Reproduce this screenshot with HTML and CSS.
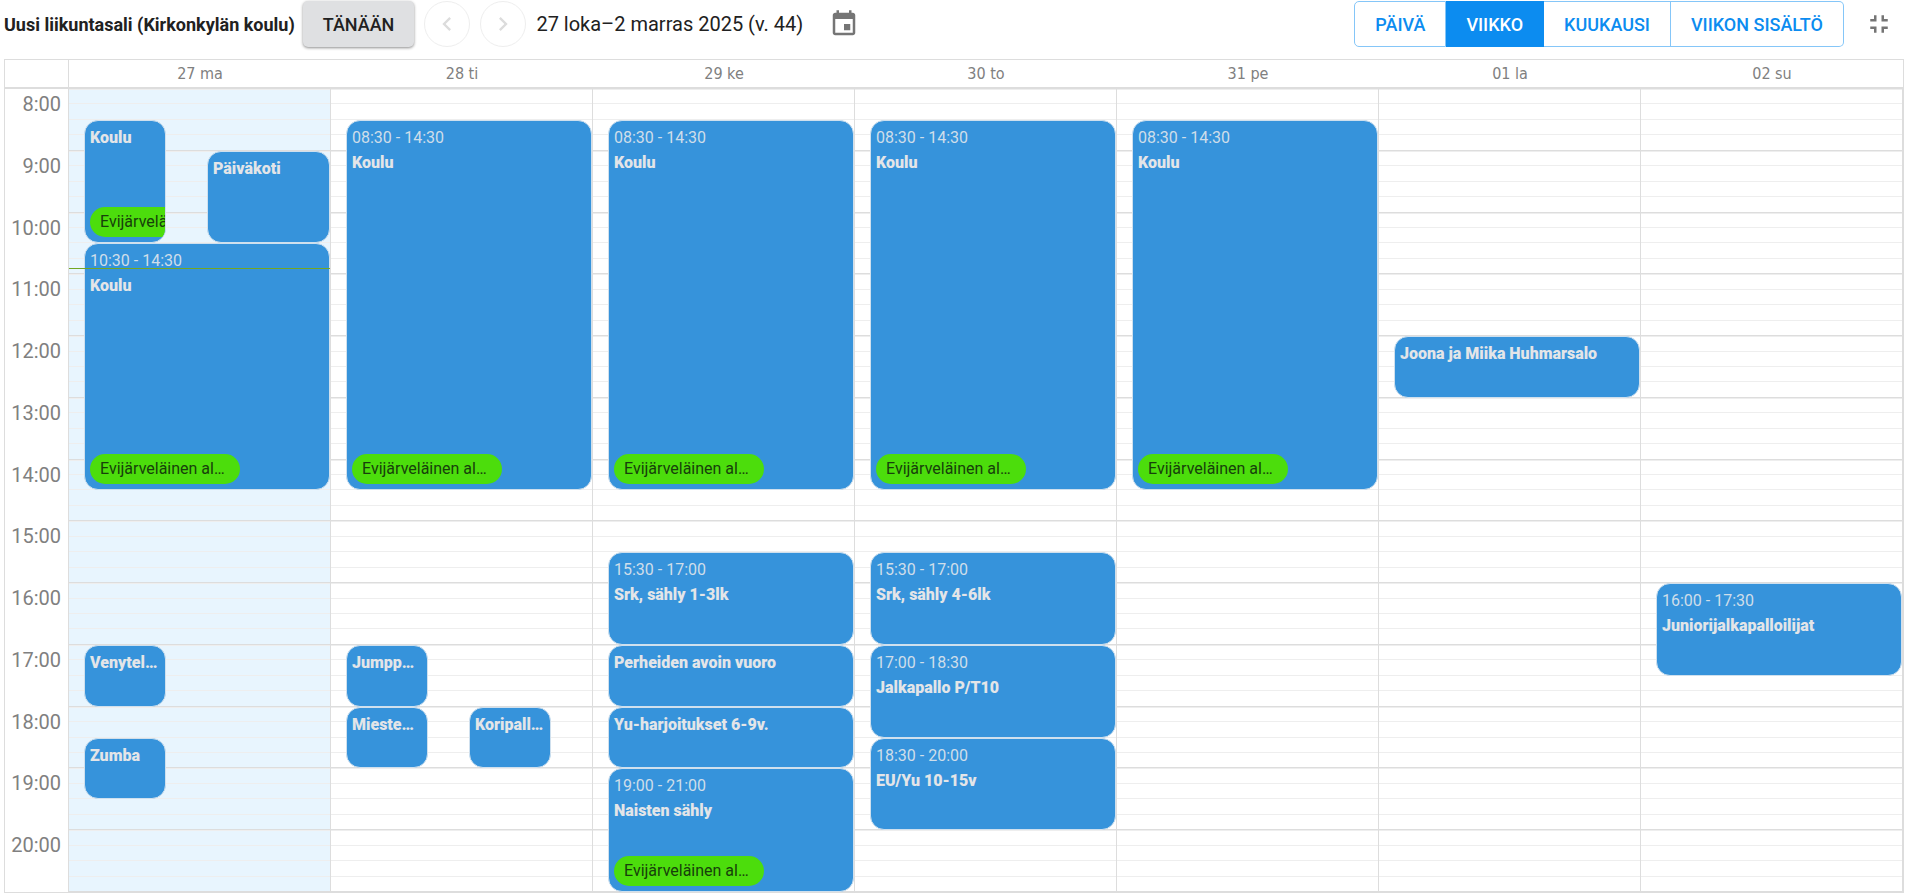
FILE: index.html
```html
<!DOCTYPE html>
<html lang="fi">
<head>
	<meta charset="UTF-8">
	<meta name="viewport" content="width=device-width, initial-scale=1.0">
	<title>Uusi liikuntasali (Kirkonkylän koulu)</title>
	<link rel="stylesheet" href="styles.css">
</head>
<body>

<!-- Toolbar -->
<header class="toolbar">
	<h1 class="room-title">Uusi liikuntasali (Kirkonkylän koulu)</h1>
	<button class="today-btn" type="button">TÄNÄÄN</button>
	<div class="nav-buttons">
		<button class="round-btn" type="button" aria-label="Edellinen" disabled>
			<svg viewBox="0 0 24 24" width="28" height="28"><path d="M15.41 7.41L14 6l-6 6 6 6 1.41-1.41L10.83 12z"/></svg>
		</button>
		<button class="round-btn" type="button" aria-label="Seuraava" disabled>
			<svg viewBox="0 0 24 24" width="28" height="28"><path d="M10 6L8.59 7.41 13.17 12l-4.58 4.59L10 18l6-6z"/></svg>
		</button>
	</div>
	<span class="date-range">27 loka–2 marras 2025 (v. 44)</span>
	<button class="icon-btn" type="button" aria-label="Valitse päivä">
		<svg viewBox="0 0 24 24" width="30" height="30"><path d="M17 12h-5v5h5v-5zM16 1v2H8V1H6v2H5c-1.11 0-1.99.9-1.99 2L3 19c0 1.1.89 2 2 2h14c1.1 0 2-.9 2-2V5c0-1.1-.9-2-2-2h-1V1h-2zm3 18H5V8h14v11z"/></svg>
	</button>

	<div class="view-switch">
		<button class="view-btn" type="button">PÄIVÄ</button>
		<button class="view-btn active" type="button">VIIKKO</button>
		<button class="view-btn" type="button">KUUKAUSI</button>
		<button class="view-btn" type="button">VIIKON SISÄLTÖ</button>
	</div>
	<button class="icon-btn" type="button" aria-label="Poistu koko näytöstä">
		<svg viewBox="0 0 24 24" width="30" height="30"><path d="M5 16h3v3h2v-5H5v2zm3-8H5v2h5V5H8v3zm6 11h2v-3h3v-2h-5v5zm2-11V5h-2v5h5V8h-3z"/></svg>
	</button>
</header>

<!-- Week calendar -->
<main class="calendar">
	<div class="day-names">
		<div class="corner"></div>
		<div class="day-name">27 ma</div>
		<div class="day-name">28 ti</div>
		<div class="day-name">29 ke</div>
		<div class="day-name">30 to</div>
		<div class="day-name">31 pe</div>
		<div class="day-name">01 la</div>
		<div class="day-name">02 su</div>
	</div>
	<div class="week" id="week">
		<div class="hours" id="hours"></div>
		<!-- Day columns are added here by JavaScript -->
	</div>
</main>

<script src="script.js"></script>

</body>
</html>
```
FILE: styles.css
```css
* {
	box-sizing: border-box;
}

body {
	display: flex;
	flex-direction: column;
	min-height: 100vh;
	margin: 0;
	padding: 0 8px 0 4px;
	background-color: white;
	color: #212121;
	font-family: Roboto, sans-serif;
	font-size: 16px;
}

button {
	font-family: inherit;
	cursor: pointer;
}

svg {
	display: block;
	fill: currentColor;
}

/* Toolbar */
.toolbar {
	display: flex;
	align-items: center;
	padding: 1px 0 12px;
}

.room-title {
	margin: 0 8px 0 0;
	font-size: 18px;
	font-weight: bold;
	white-space: nowrap;
}

.today-btn {
	height: 46px;
	padding: 0 20px;
	border: none;
	border-radius: 5px;
	background-color: #dfe0e2;
	box-shadow: 0 1px 3px rgba(0, 0, 0, 0.45);
	color: #212121;
	font-size: 18px;
	font-weight: 500;
}

.nav-buttons {
	display: flex;
	gap: 10px;
	margin: 0 10px;
}

.round-btn {
	display: flex;
	align-items: center;
	justify-content: center;
	width: 46px;
	height: 46px;
	padding: 0;
	border: 1px solid #eeeeee;
	border-radius: 50%;
	background: white;
	color: #dcdcdc;
}

.date-range {
	margin-right: 6px;
	font-size: 20px;
	white-space: nowrap;
}

.icon-btn {
	margin: 0 10px 0 20px;
	padding: 0;
	border: none;
	background: none;
	color: #757575;
}

.view-switch {
	display: flex;
	margin-left: auto;
}

.view-btn {
	height: 46px;
	padding: 0 20px;
	border: 1px solid #85c6f8;
	border-left-width: 0;
	background-color: white;
	color: #0c8cf0;
	font-size: 18px;
	font-weight: 500;
	white-space: nowrap;
}

.view-btn:first-child {
	border-left-width: 1px;
	border-radius: 5px 0 0 5px;
}

.view-btn:last-child {
	border-radius: 0 5px 5px 0;
}

.view-btn.active {
	border-color: #0c8cf0;
	background-color: #0c8cf0;
	color: white;
}

/* Calendar */
.calendar {
	display: flex;
	flex: 1;
	flex-direction: column;
	border: 1px solid #dddddd;
}

.day-names,
.week {
	display: grid;
	grid-template-columns: 64px repeat(7, 1fr);
}

.day-names {
	height: 29px;
	border-bottom: 2px solid #dddddd;
	color: #808080;
	font-family: "DejaVu Sans Condensed", "DejaVu Sans", sans-serif;
	line-height: 28px;
	text-align: center;
}

.corner {
	border-right: 1px solid #dddddd;
}

.week {
	flex: 1;
}

.hours {
	display: grid;
	grid-template-rows: repeat(13, minmax(48px, 1fr));
	padding-right: 7px;
	border-right: 1px solid #dddddd;
	color: #808080;
	font-size: 20px;
	line-height: 30px;
	text-align: right;
}

.day {
	display: grid;
	position: relative;
	grid-template-rows: repeat(52, 1fr); /* 15 minutes each */
	grid-template-columns: 15px repeat(6, 1fr);
	border-right: 1px solid #dddddd;
}

.day.today {
	background-color: #e8f5fe;
}

.slot {
	grid-column: 1 / -1;
	border-bottom: 1px solid #eeeeee;
}

.slot.full-hour {
	border-bottom-color: #dddddd;
}

.slot.after-hour {
	border-top: 1px solid #eeeeee;
}

.event {
	display: flex;
	flex-direction: column;
	min-width: 0;
	min-height: 0;
	padding: 4px 5px 5px;
	overflow: hidden;
	border: 1px solid #cfe0ee;
	border-radius: 14px;
	background-color: #3693db;
	color: #e3e5e8;
	line-height: 25px;
	white-space: nowrap;
}

.event-time {
	color: #cfdeea;
}

.event-title {
	font-weight: 900;
}

.event-tag {
	flex: none;
	width: 150px;
	margin-top: auto;
	padding: 0 10px;
	border-radius: 15px;
	background-color: #4cdd0c;
	color: #17400b;
	line-height: 30px;
}

/* Current time */
.now-line {
	position: absolute;
	right: 0;
	left: 0;
	height: 1px;
	background-color: #74a622;
}
```
FILE: script.js
```js
var firstHour = 8;
var lastHour = 21;
var now = 10.9;

// from and to are in sixths of the day column
var days = [
	[
		{ start: 8.5, end: 10.5, title: 'Koulu', from: 0, to: 2, tag: true },
		{ start: 9, end: 10.5, title: 'Päiväkoti', from: 3, to: 6 },
		{ start: 10.5, end: 14.5, time: '10:30 - 14:30', title: 'Koulu', tag: true },
		{ start: 17, end: 18, title: 'Venytel…', from: 0, to: 2 },
		{ start: 18.5, end: 19.5, title: 'Zumba', from: 0, to: 2 }
	],
	[
		{ start: 8.5, end: 14.5, time: '08:30 - 14:30', title: 'Koulu', tag: true },
		{ start: 17, end: 18, title: 'Jumpp…', from: 0, to: 2 },
		{ start: 18, end: 19, title: 'Mieste…', from: 0, to: 2 },
		{ start: 18, end: 19, title: 'Koripall…', from: 3, to: 5 }
	],
	[
		{ start: 8.5, end: 14.5, time: '08:30 - 14:30', title: 'Koulu', tag: true },
		{ start: 15.5, end: 17, time: '15:30 - 17:00', title: 'Srk, sähly 1-3lk' },
		{ start: 17, end: 18, title: 'Perheiden avoin vuoro' },
		{ start: 18, end: 19, title: 'Yu-harjoitukset 6-9v.' },
		{ start: 19, end: 21, time: '19:00 - 21:00', title: 'Naisten sähly', tag: true }
	],
	[
		{ start: 8.5, end: 14.5, time: '08:30 - 14:30', title: 'Koulu', tag: true },
		{ start: 15.5, end: 17, time: '15:30 - 17:00', title: 'Srk, sähly 4-6lk' },
		{ start: 17, end: 18.5, time: '17:00 - 18:30', title: 'Jalkapallo P/T10' },
		{ start: 18.5, end: 20, time: '18:30 - 20:00', title: 'EU/Yu 10-15v' }
	],
	[
		{ start: 8.5, end: 14.5, time: '08:30 - 14:30', title: 'Koulu', tag: true }
	],
	[
		{ start: 12, end: 13, title: 'Joona ja Miika Huhmarsalo' }
	],
	[
		{ start: 16, end: 17.5, time: '16:00 - 17:30', title: 'Juniorijalkapalloilijat' }
	]
];

function addElement(parent, className, text) {
	var el = document.createElement('div');
	el.className = className;
	if (text) {
		el.textContent = text;
	}
	parent.appendChild(el);
	return el;
}

// Grid row of a time, four rows per hour
function rowOf(time) {
	return (time - firstHour) * 4 + 1;
}

for (var hour = firstHour; hour < lastHour; hour++) {
	addElement(document.getElementById('hours'), 'hour', hour + ':00');
}

days.forEach(function (events, index) {
	var day = addElement(document.getElementById('week'), index === 0 ? 'day today' : 'day');

	for (var i = 1; i <= (lastHour - firstHour) * 4; i++) {
		var slot = addElement(day, 'slot');
		slot.style.gridRow = i;
		if (i % 4 === 0) {
			slot.classList.add('full-hour');
		}
		if (i % 4 === 1) {
			slot.classList.add('after-hour');
		}
	}

	events.forEach(function (event) {
		var box = addElement(day, 'event');
		box.style.gridRow = rowOf(event.start) + ' / ' + rowOf(event.end);
		box.style.gridColumn = ((event.from || 0) + 2) + ' / ' + ((event.to || 6) + 2);
		if (event.time) {
			addElement(box, 'event-time', event.time);
		}
		addElement(box, 'event-title', event.title);
		if (event.tag) {
			addElement(box, 'event-tag', 'Evijärveläinen al…');
		}
	});

	if (index === 0) {
		var line = addElement(day, 'now-line');
		line.style.top = (now - firstHour) / (lastHour - firstHour) * 100 + '%';
	}
});
```
